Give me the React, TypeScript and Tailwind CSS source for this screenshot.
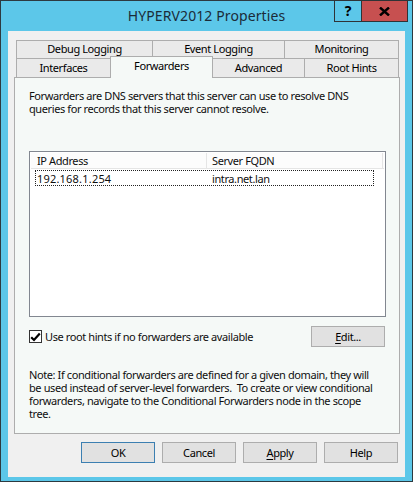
import React from "react";

const tabTop = [
  { label: "Debug Logging", w: "w-[136px]" },
  { label: "Event Logging", w: "w-[132px]" },
  { label: "Monitoring", w: "w-[115px] border-r" },
];

function PushButton({ children, primary }: { children: React.ReactNode; primary?: boolean }) {
  return (
    <button
      type="button"
      className={`flex h-[21px] w-[74px] items-center justify-center bg-[#e1e1e1] pb-[1px] leading-none text-black ${
        primary ? "border border-[#3c7fb1]" : "border border-[#adadad]"
      }`}
    >
      {children}
    </button>
  );
}

export default function App() {
  return (
    <div className="flex h-[482px] w-[413px] flex-col border border-[#2d3a40] bg-[#5cc7e9] font-['Noto_Sans',sans-serif] text-[11px] tracking-[-0.4px] text-black">
      {/* Title bar */}
      <div className="relative flex h-[30px] shrink-0 items-center justify-center">
        <span className="pb-[1px] text-[14px] tracking-[0.1px] text-[#1b2b38]">HYPERV2012 Properties</span>
        <div className="absolute right-[4px] top-[-1px] flex h-[22px] border border-[#2f3336]">
          <div className="flex w-[27px] items-center justify-center border-r border-[#2f3336] text-[14px] font-bold leading-none">
            ?
          </div>
          <div className="flex w-[45px] items-center justify-center bg-[#c75050]">
            <svg width="11" height="9" viewBox="0 0 11 9">
              <path d="M1 0.5L10 8.5M10 0.5L1 8.5" stroke="#000" strokeWidth="2.4" />
            </svg>
          </div>
        </div>
      </div>

      {/* Client area */}
      <div className="mx-[7px] flex h-[446px] shrink-0 flex-col bg-[#f0f0f0] px-[6px] pt-[9px]">
        {/* Tabs */}
        <div className="pl-[2px]">
          <div className="flex h-[18px]">
            {tabTop.map((t) => (
              <div
                key={t.label}
                className={`flex items-center justify-center border-l border-t border-[#adadad] bg-[#eaeaea] ${t.w}`}
              >
                {t.label}
              </div>
            ))}
          </div>
          <div className="flex h-[19px]">
            <div className="flex w-[94px] items-center justify-center border-l border-t border-[#adadad] bg-[#eaeaea]">
              Interfaces
            </div>
            <div className="relative z-10 -mt-[2px] flex h-[22px] w-[103px] items-start justify-center border-x border-t border-[#adadad] bg-[#f5f9f7] pt-[1px]">
              Forwarders
            </div>
            <div className="flex w-[91px] items-center justify-center border-t border-[#adadad] bg-[#eaeaea]">
              Advanced
            </div>
            <div className="flex w-[95px] items-center justify-center border-x border-t border-[#adadad] bg-[#eaeaea]">
              Root Hints
            </div>
          </div>
        </div>

        {/* Tab page */}
        <div className="h-[357px] w-[386px] border border-[#adadad] bg-[#f5f9f7] px-[14px] pt-[11px] leading-[13px] text-[#0f0f0f]">
          <p className="whitespace-nowrap">
            Forwarders are DNS servers that this server can use to resolve DNS
            <br />
            queries for records that this server cannot resolve.
          </p>

          <div className="mt-[36px] h-[166px] w-[357px] border border-[#828790] bg-white p-[1px]">
            <div className="flex h-[16px] border-b border-[#e5e5e5] bg-[#fcfcfc]">
              <div className="flex w-[176px] items-center border-r border-[#e5e5e5] pl-[6px]">IP Address</div>
              <div className="flex w-[176px] items-center border-r border-[#e5e5e5] pl-[5px]">Server FQDN</div>
            </div>
            <div className="ml-[4px] mt-[1px] flex h-[16px] w-[339px] items-center border border-dotted border-[#222]">
              <div className="w-[176px] pl-[1px] tracking-[0.2px]">192.168.1.254</div>
              <div>intra.net.lan</div>
            </div>
          </div>

          <div className="mt-[9px] flex w-[357px] items-center justify-between">
            <label className="flex items-center gap-[3px]">
              <span className="flex h-[13px] w-[13px] items-center justify-center border border-[#333] bg-white">
                <svg width="11" height="10" viewBox="0 0 11 10">
                  <path d="M1.2 5.2L4 8L9.8 1.4" fill="none" stroke="#000" strokeWidth="2.2" />
                </svg>
              </span>
              <span className="pb-[1px]">Use root hints if no forwarders are available</span>
            </label>
            <div className="mr-[1px]">
              <PushButton>
                <span>
                  <span className="underline underline-offset-2">E</span>dit...
                </span>
              </PushButton>
            </div>
          </div>

          <p className="mt-[21px] whitespace-nowrap">
            Note: If conditional forwarders are defined for a given domain, they will
            <br />
            be used instead of server-level forwarders.&nbsp; To create or view conditional
            <br />
            forwarders, navigate to the Conditional Forwarders node in the scope
            <br />
            tree.
          </p>
        </div>

        {/* Dialog buttons */}
        <div className="mt-[8px] flex justify-end gap-[7px] pr-[1px]">
          <PushButton primary>OK</PushButton>
          <PushButton>Cancel</PushButton>
          <PushButton>
            <span>
              <span className="underline underline-offset-2">A</span>pply
            </span>
          </PushButton>
          <PushButton>Help</PushButton>
        </div>
      </div>
    </div>
  );
}
